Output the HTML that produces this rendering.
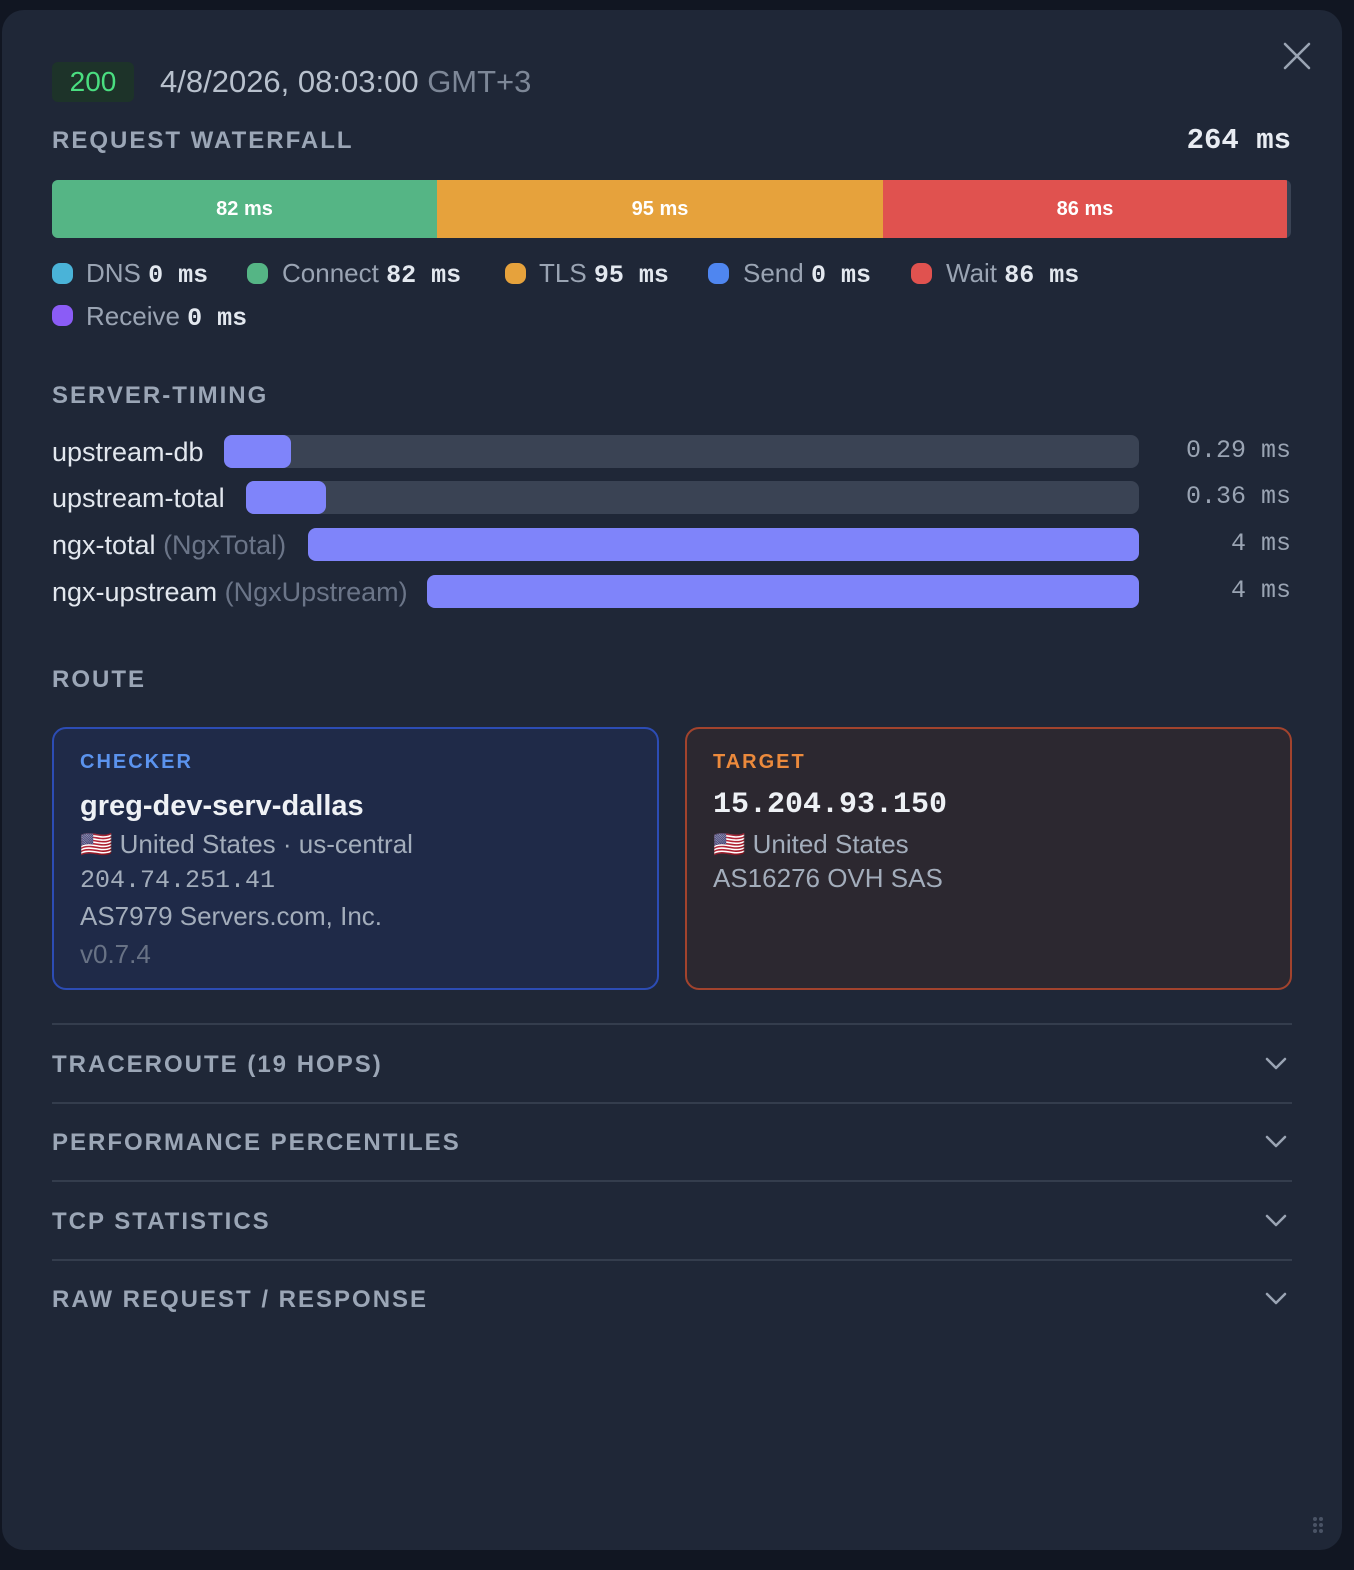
<!DOCTYPE html>
<html><head><meta charset="utf-8"><style>
*{margin:0;padding:0;box-sizing:border-box}
body{width:1354px;height:1570px;background:#111622;position:relative;overflow:hidden;font-family:"Liberation Sans",sans-serif}
.modal{position:absolute;left:2px;top:10px;width:1340px;height:1540px;background:#1f2737;border-radius:22px}
.a{position:absolute;white-space:nowrap}
.mono{font-family:"Liberation Mono",monospace}
.h{font-weight:bold;font-size:24px;letter-spacing:2px;color:#9ba6b6}
.dot{position:absolute;width:21px;height:21px;border-radius:8px}
.lg{font-size:26px;color:#9aa4b3}
.lg b{font-family:"Liberation Mono",monospace;font-weight:bold;color:#e3e8ef;font-size:25px}
.track{position:absolute;left:0;height:33px;background:#3a4354;border-radius:8px}
.fill{position:absolute;top:0;height:33px;background:#7f84fa;border-radius:8px}
.lbl{font-size:27px;color:#e2e7ee}
.lbl span{color:#6b7588}
.val{font-family:"Liberation Mono",monospace;font-size:25px;color:#9aa4b3;text-align:right;width:200px;left:1091px}
.div{position:absolute;left:52px;width:1240px;height:2px;background:#343d4d}
.chev{position:absolute;left:1265px;width:22px;height:14px}
</style></head><body>
<div class="modal"></div>
<svg class="a" style="left:1283px;top:42px" width="28" height="28" viewBox="0 0 28 28"><path d="M2 2L26 26M26 2L2 26" stroke="#9aa4b3" stroke-width="2.6" stroke-linecap="round"/></svg>
<div class="a" style="left:52px;top:62px;width:82px;height:40px;background:#1d3329;border-radius:6px"></div>
<div class="a" style="left:52px;top:64px;width:82px;text-align:center;font-size:28px;line-height:36px;color:#4ade80">200</div>
<div class="a" style="left:160px;top:63px;font-size:31px;line-height:38px;color:#b8c1cd">4/8/2026, 08:03:00 <span style="color:#7d8797">GMT+3</span></div>

<div class="a h" style="left:52px;top:127px;line-height:28px">REQUEST WATERFALL</div>
<div class="a mono" style="left:1091px;width:200px;text-align:right;top:124px;font-size:29px;font-weight:bold;color:#e8ecf2;line-height:34px">264 ms</div>

<div class="a" style="left:52px;top:180px;width:1239px;height:58px;border-radius:6px;overflow:hidden;background:#3a4354">
<div class="a" style="left:0;top:0;width:385px;height:58px;background:#55b585"></div>
<div class="a" style="left:385px;top:0;width:446px;height:58px;background:#e6a23c"></div>
<div class="a" style="left:831px;top:0;width:404px;height:58px;background:#e0524f"></div>
</div>
<div class="a" style="left:52px;top:196px;width:385px;text-align:center;color:#fff;font-size:20px;font-weight:bold;line-height:26px">82 ms</div>
<div class="a" style="left:437px;top:196px;width:446px;text-align:center;color:#fff;font-size:20px;font-weight:bold;line-height:26px">95 ms</div>
<div class="a" style="left:883px;top:196px;width:404px;text-align:center;color:#fff;font-size:20px;font-weight:bold;line-height:26px">86 ms</div>

<div class="dot" style="left:52px;top:263px;background:#4ab3d8"></div><div class="a lg" style="left:86px;top:258px;line-height:30px">DNS <b>0 ms</b></div>
<div class="dot" style="left:247px;top:263px;background:#55b585"></div><div class="a lg" style="left:282px;top:258px;line-height:30px">Connect <b>82 ms</b></div>
<div class="dot" style="left:505px;top:263px;background:#e6a23c"></div><div class="a lg" style="left:539px;top:258px;line-height:30px">TLS <b>95 ms</b></div>
<div class="dot" style="left:708px;top:263px;background:#4f86f0"></div><div class="a lg" style="left:743px;top:258px;line-height:30px">Send <b>0 ms</b></div>
<div class="dot" style="left:911px;top:263px;background:#e0524f"></div><div class="a lg" style="left:946px;top:258px;line-height:30px">Wait <b>86 ms</b></div>
<div class="dot" style="left:52px;top:305px;background:#8b5cf6"></div><div class="a lg" style="left:86px;top:301px;line-height:30px">Receive <b>0 ms</b></div>

<div class="a h" style="left:52px;top:382px;line-height:28px">SERVER-TIMING</div>

<div class="a lbl" style="left:52px;top:437px;line-height:30px">upstream-db</div>
<div class="a" style="left:224px;top:435px;width:915px;height:33px"><div class="track" style="width:915px"></div><div class="fill" style="left:0;width:67px"></div></div>
<div class="a val" style="top:436px;line-height:30px">0.29 ms</div>

<div class="a lbl" style="left:52px;top:483px;line-height:30px">upstream-total</div>
<div class="a" style="left:246px;top:481px;width:893px;height:33px"><div class="track" style="width:893px"></div><div class="fill" style="left:0;width:80px"></div></div>
<div class="a val" style="top:482px;line-height:30px">0.36 ms</div>

<div class="a lbl" style="left:52px;top:530px;line-height:30px">ngx-total <span>(NgxTotal)</span></div>
<div class="a" style="left:308px;top:528px;width:831px;height:33px"><div class="fill" style="left:0;width:831px"></div></div>
<div class="a val" style="top:529px;line-height:30px">4 ms</div>

<div class="a lbl" style="left:52px;top:577px;line-height:30px">ngx-upstream <span>(NgxUpstream)</span></div>
<div class="a" style="left:427px;top:575px;width:712px;height:33px"><div class="fill" style="left:0;width:712px"></div></div>
<div class="a val" style="top:576px;line-height:30px">4 ms</div>

<div class="a h" style="left:52px;top:666px;line-height:28px">ROUTE</div>

<div class="a" style="left:52px;top:727px;width:607px;height:263px;border:2px solid #2c4cb4;border-radius:14px;background:#1f2a48"></div>
<div class="a" style="left:80px;top:750px;font-size:20px;font-weight:bold;letter-spacing:2px;color:#5b93ee;line-height:24px">CHECKER</div>
<div class="a" style="left:80px;top:789px;font-size:29px;font-weight:bold;color:#eef1f5;line-height:34px">greg-dev-serv-dallas</div>
<div class="a" style="left:80px;top:829px;font-size:26px;color:#a3adbb;line-height:30px">🇺🇸 United States · us-central</div>
<div class="a mono" style="left:80px;top:866px;font-size:25px;color:#a3adbb;line-height:30px">204.74.251.41</div>
<div class="a" style="left:80px;top:901px;font-size:26px;color:#a3adbb;line-height:30px">AS7979 Servers.com, Inc.</div>
<div class="a" style="left:80px;top:939px;font-size:26px;color:#687285;line-height:30px">v0.7.4</div>

<div class="a" style="left:685px;top:727px;width:607px;height:263px;border:2px solid #a2432d;border-radius:14px;background:#2c2830"></div>
<div class="a" style="left:713px;top:750px;font-size:20px;font-weight:bold;letter-spacing:2px;color:#ec8a3c;line-height:24px">TARGET</div>
<div class="a mono" style="left:713px;top:787px;font-size:30px;font-weight:bold;color:#eef1f5;line-height:36px">15.204.93.150</div>
<div class="a" style="left:713px;top:829px;font-size:26px;color:#a3adbb;line-height:30px">🇺🇸 United States</div>
<div class="a" style="left:713px;top:863px;font-size:26px;color:#a3adbb;line-height:30px">AS16276 OVH SAS</div>

<div class="div" style="top:1023px"></div>
<div class="a h" style="left:52px;top:1051px;line-height:28px">TRACEROUTE (19 HOPS)</div>
<svg class="chev" style="top:1057px" viewBox="0 0 22 14"><path d="M2 2L11 11L20 2" fill="none" stroke="#9aa4b3" stroke-width="2.5" stroke-linecap="round" stroke-linejoin="round"/></svg>
<div class="div" style="top:1102px"></div>
<div class="a h" style="left:52px;top:1129px;line-height:28px">PERFORMANCE PERCENTILES</div>
<svg class="chev" style="top:1135px" viewBox="0 0 22 14"><path d="M2 2L11 11L20 2" fill="none" stroke="#9aa4b3" stroke-width="2.5" stroke-linecap="round" stroke-linejoin="round"/></svg>
<div class="div" style="top:1180px"></div>
<div class="a h" style="left:52px;top:1208px;line-height:28px">TCP STATISTICS</div>
<svg class="chev" style="top:1214px" viewBox="0 0 22 14"><path d="M2 2L11 11L20 2" fill="none" stroke="#9aa4b3" stroke-width="2.5" stroke-linecap="round" stroke-linejoin="round"/></svg>
<div class="div" style="top:1259px"></div>
<div class="a h" style="left:52px;top:1286px;line-height:28px">RAW REQUEST / RESPONSE</div>
<svg class="chev" style="top:1292px" viewBox="0 0 22 14"><path d="M2 2L11 11L20 2" fill="none" stroke="#9aa4b3" stroke-width="2.5" stroke-linecap="round" stroke-linejoin="round"/></svg>

<svg class="a" style="left:1312px;top:1516px" width="12" height="18" viewBox="0 0 12 18"><g fill="#4a5365"><circle cx="3" cy="3" r="2"/><circle cx="9" cy="3" r="2"/><circle cx="3" cy="9" r="2"/><circle cx="9" cy="9" r="2"/><circle cx="3" cy="15" r="2"/><circle cx="9" cy="15" r="2"/></g></svg>
</body></html>
